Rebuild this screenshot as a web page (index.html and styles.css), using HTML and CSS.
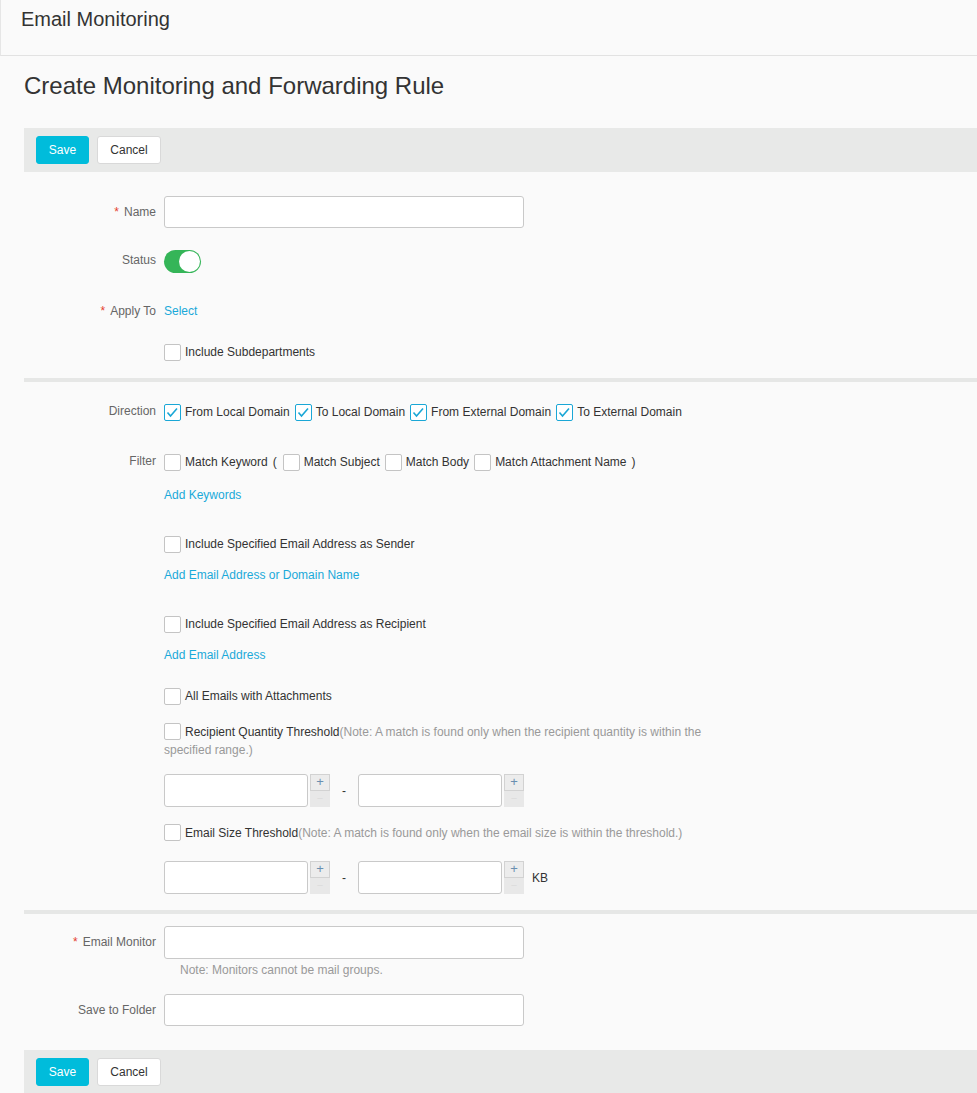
FILE: index.html
```html
<!DOCTYPE html>
<html lang="en">
<head>
<meta charset="utf-8">
<title>Email Monitoring</title>
<link rel="stylesheet" href="styles.css">
</head>
<body>
<header class="topbar"><h1 class="topbar-title">Email Monitoring</h1></header>
<main class="page">
  <h2 class="page-title">Create Monitoring and Forwarding Rule</h2>
  <div class="toolbar">
    <button class="btn btn-primary">Save</button>
    <button class="btn btn-default">Cancel</button>
  </div>

  <section class="form-section sec-basic">
    <div class="row row-name">
      <label class="lbl"><span class="req">*</span>Name</label>
      <div class="ctl"><input class="text-input" type="text"></div>
    </div>
    <div class="row row-status">
      <label class="lbl lbl-status">Status</label>
      <div class="ctl"><span class="toggle"><span class="knob"></span></span></div>
    </div>
    <div class="row row-apply">
      <label class="lbl"><span class="req">*</span>Apply To</label>
      <div class="ctl line"><a class="link">Select</a></div>
    </div>
    <div class="row row-sub">
      <span class="lbl"></span>
      <div class="ctl line"><span class="cb"></span><span class="opt">Include Subdepartments</span></div>
    </div>
  </section>

  <hr class="divider">

  <section class="form-section sec-filter">
    <div class="row row-dir">
      <label class="lbl lbl-up">Direction</label>
      <div class="ctl line">
        <span class="cb checked"><svg viewBox="0 0 16 16" width="16" height="16"><path d="M3.5 8.5 L6.5 12 L13 4.5" fill="none" stroke="#1aa7d6" stroke-width="1.6"/></svg></span><span class="opt">From Local Domain</span>
        <span class="cb checked"><svg viewBox="0 0 16 16" width="16" height="16"><path d="M3.5 8.5 L6.5 12 L13 4.5" fill="none" stroke="#1aa7d6" stroke-width="1.6"/></svg></span><span class="opt">To Local Domain</span>
        <span class="cb checked"><svg viewBox="0 0 16 16" width="16" height="16"><path d="M3.5 8.5 L6.5 12 L13 4.5" fill="none" stroke="#1aa7d6" stroke-width="1.6"/></svg></span><span class="opt">From External Domain</span>
        <span class="cb checked"><svg viewBox="0 0 16 16" width="16" height="16"><path d="M3.5 8.5 L6.5 12 L13 4.5" fill="none" stroke="#1aa7d6" stroke-width="1.6"/></svg></span><span class="opt">To External Domain</span>
      </div>
    </div>
    <div class="row row-filter">
      <label class="lbl lbl-up">Filter</label>
      <div class="ctl">
        <div class="line">
          <span class="cb"></span><span class="opt">Match Keyword</span><span class="paren">(</span>
          <span class="cb"></span><span class="opt">Match Subject</span>
          <span class="cb"></span><span class="opt">Match Body</span>
          <span class="cb"></span><span class="opt">Match Attachment Name</span><span class="paren">)</span>
        </div>
        <div class="line gap-15"><a class="link">Add Keywords</a></div>
        <div class="line gap-31"><span class="cb"></span><span class="opt">Include Specified Email Address as Sender</span></div>
        <div class="line gap-13"><a class="link">Add Email Address or Domain Name</a></div>
        <div class="line gap-31"><span class="cb"></span><span class="opt">Include Specified Email Address as Recipient</span></div>
        <div class="line gap-13"><a class="link">Add Email Address</a></div>
        <div class="line gap-23"><span class="cb"></span><span class="opt">All Emails with Attachments</span></div>
        <p class="para gap-18"><span class="cb cb-inline"></span><span class="opt-tight">Recipient Quantity Threshold</span><span class="note">(Note: A match is found only when the recipient quantity is within the specified range.)</span></p>
        <div class="range gap-15">
          <span class="num"><input class="num-input" type="text"><span class="spin"><span class="up">+</span><span class="down">−</span></span></span>
          <span class="dash">-</span>
          <span class="num"><input class="num-input" type="text"><span class="spin"><span class="up">+</span><span class="down">−</span></span></span>
        </div>
        <p class="para gap-17"><span class="cb cb-inline"></span><span class="opt-tight">Email Size Threshold</span><span class="note">(Note: A match is found only when the email size is within the threshold.)</span></p>
        <div class="range gap-19">
          <span class="num"><input class="num-input" type="text"><span class="spin"><span class="up">+</span><span class="down">−</span></span></span>
          <span class="dash">-</span>
          <span class="num"><input class="num-input" type="text"><span class="spin"><span class="up">+</span><span class="down">−</span></span></span>
          <span class="unit">KB</span>
        </div>
      </div>
    </div>
  </section>

  <hr class="divider divider-2">

  <section class="form-section sec-monitor">
    <div class="row row-monitor">
      <label class="lbl lbl-mid"><span class="req">*</span>Email Monitor</label>
      <div class="ctl">
        <input class="text-input" type="text">
        <div class="hint">Note: Monitors cannot be mail groups.</div>
      </div>
    </div>
    <div class="row row-folder">
      <label class="lbl lbl-mid">Save to Folder</label>
      <div class="ctl"><input class="text-input" type="text"></div>
    </div>
  </section>

  <div class="toolbar toolbar-bottom">
    <button class="btn btn-primary">Save</button>
    <button class="btn btn-default">Cancel</button>
  </div>
</main>
</body>
</html>
```

FILE: styles.css
```css
* { box-sizing: border-box; }
html, body { margin: 0; padding: 0; }
body {
  background: #fafafa;
  font-family: "Liberation Sans", Arial, sans-serif;
  font-size: 12px;
  color: #333;
  overflow: hidden;
}
.topbar {
  height: 56px;
  border-left: 1px solid #e6e6e6;
  border-bottom: 1px solid #e2e2e2;
  padding: 7px 0 0 20px;
}
.topbar-title {
  margin: 0;
  font-size: 20px;
  font-weight: normal;
  line-height: 24px;
  color: #333;
}
.page { padding-left: 24px; }
.page-title {
  margin: 0;
  padding-top: 16px;
  font-size: 24px;
  font-weight: normal;
  line-height: 28px;
  color: #333;
  height: 72px;
}
.toolbar {
  height: 44px;
  background: #e8e9e8;
  display: flex;
  align-items: center;
  gap: 8px;
  padding-left: 12px;
}
.btn {
  height: 28px;
  border-radius: 3px;
  font-family: inherit;
  font-size: 12px;
  padding: 0;
  cursor: pointer;
}
.btn-primary {
  width: 53px;
  background: #00bcdb;
  color: #fff;
  border: 1px solid #00bcdb;
}
.btn-default {
  width: 64px;
  background: #fff;
  color: #333;
  border: 1px solid #d9d9d9;
}
.row {
  display: grid;
  grid-template-columns: 132px 1fr;
  column-gap: 8px;
}
.lbl {
  text-align: right;
  color: #666;
  line-height: 18px;
  white-space: nowrap;
}
.req { color: #e5412d; margin-right: 5px; font-size: 12px; }
.ctl { min-width: 0; }
.line {
  display: flex;
  align-items: center;
  height: 18px;
  white-space: nowrap;
}
.link { color: #1aa9d9; cursor: pointer; }
.text-input {
  display: block;
  width: 360px;
  height: 32px;
  border: 1px solid #c9c9c9;
  border-radius: 3px;
  background: #fff;
  margin: 0;
  font-family: inherit;
}
.sec-basic { padding-top: 24px; }
.row-name .lbl { line-height: 32px; }
.row-status { margin-top: 22px; }
.lbl-status { line-height: 20px; }
.toggle {
  display: block;
  width: 37px;
  height: 23px;
  border-radius: 12px;
  background: #35b558;
  position: relative;
}
.knob {
  position: absolute;
  right: 1px;
  top: 1px;
  width: 21px;
  height: 21px;
  border-radius: 50%;
  background: #fff;
}
.row-apply { margin-top: 29px; }
.row-sub { margin-top: 23px; }
.cb {
  display: inline-block;
  flex: none;
  width: 17px;
  height: 17px;
  border: 1px solid #c4c4c4;
  border-radius: 2px;
  background: #fff;
  margin-right: 4px;
  position: relative;
}
.cb.checked { border-color: #1aa7d6; }
.cb svg { position: absolute; left: -1px; top: -1px; }
.opt { margin-right: 5px; }
.paren { margin: 0 6px 0 0; }
.divider {
  border: 0;
  height: 4px;
  background: #e6e7e6;
  margin: 17px 0 0 0;
}
.sec-filter { padding-top: 21px; }
.row-dir .lbl { line-height: 16px; }
.row-filter { margin-top: 32px; }
.row-filter .lbl { line-height: 16px; }
.gap-13 { margin-top: 13px; }
.gap-15 { margin-top: 15px; }
.gap-16 { margin-top: 16px; }
.gap-17 { margin-top: 17px; }
.gap-18 { margin-top: 18px; }
.gap-19 { margin-top: 19px; }
.gap-23 { margin-top: 23px; }
.gap-31 { margin-top: 31px; }
.para {
  margin-bottom: 0;
  width: 545px;
  line-height: 18px;
}
.cb-inline { vertical-align: -4px; }
.note { color: #999; }
.range {
  display: flex;
  align-items: center;
  height: 33px;
}
.num { display: flex; height: 33px; }
.num-input {
  width: 144px;
  height: 33px;
  border: 1px solid #c9c9c9;
  border-radius: 3px;
  background: #fff;
  margin: 0;
}
.spin {
  display: flex;
  flex-direction: column;
  margin-left: 2px;
  width: 20px;
}
.up {
  height: 17px;
  border: 1px solid #d2d2d2;
  background: #ececec;
  color: #6a8fb0;
  font-size: 13px;
  line-height: 14px;
  text-align: center;
}
.down {
  height: 16px;
  background: #e8e8e8;
  color: #dcdcdc;
  font-size: 11px;
  line-height: 15px;
  text-align: center;
}
.dash { width: 28px; text-align: center; margin-left: 0; }
.unit { margin-left: 8px; }
.divider-2 { margin-top: 16px; }
.sec-monitor { padding-top: 12px; }
.lbl-mid { line-height: 33px; }
.row-monitor .text-input { height: 33px; }
.hint {
  color: #999;
  margin-left: 16px;
  line-height: 18px;
  margin-top: 2px;
}
.row-folder { margin-top: 15px; }
.row-folder .text-input { height: 32px; }
.toolbar-bottom { margin-top: 23px; }
```
